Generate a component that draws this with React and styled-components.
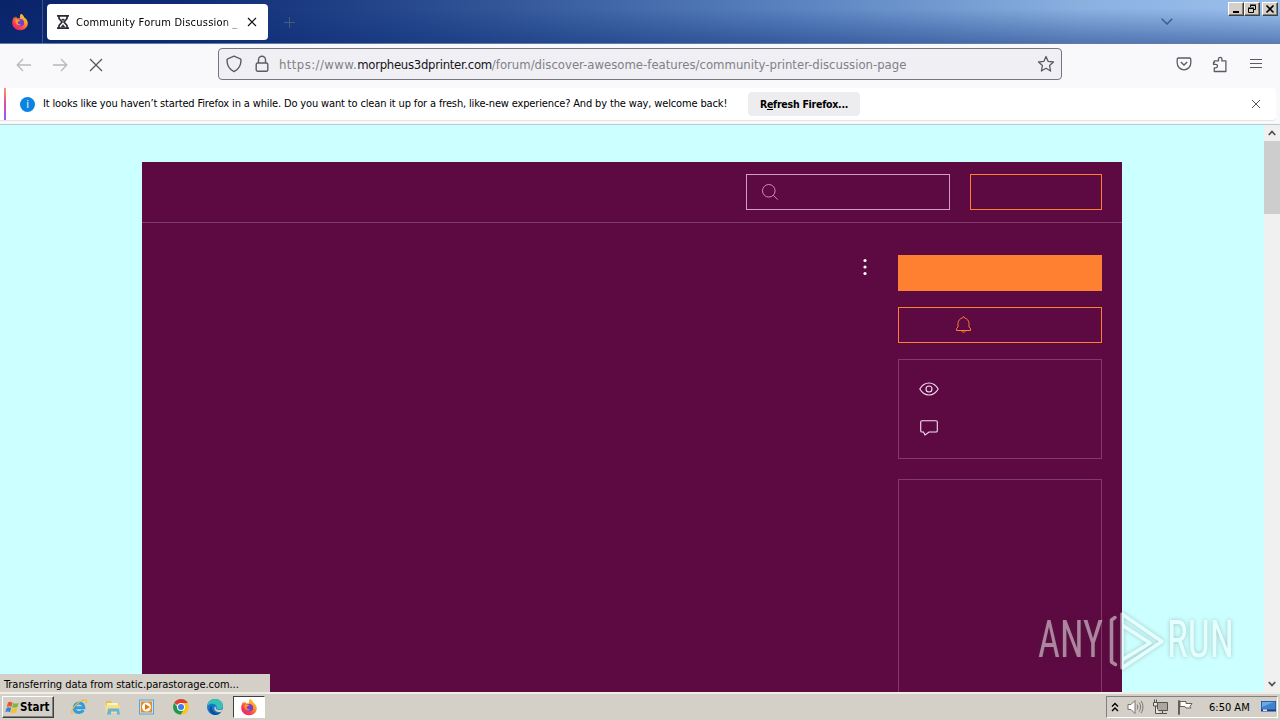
import styled, { createGlobalStyle } from "styled-components";

export default function App(){
    return (<>
        <GlobalStyle/>
        <Screen>
            <TabStrip/>
            <NavBar/>
            <Notification/>
            <Viewport>
                <ForumPage/>
                <Scrollbar/>
                <StatusText>Transferring data from static.parastorage.com...</StatusText>
                <Watermark/>
            </Viewport>
            <Taskbar/>
        </Screen>
    </>)
}

function FirefoxLogo({size = 18}){
    return (<svg width={size} height={size} viewBox="0 0 18 18">
        <defs>
            <linearGradient id="fox" x1="1" y1="0" x2="0.2" y2="1">
                <stop offset="0" stopColor="#fff04a"/>
                <stop offset="0.4" stopColor="#ff9a24"/>
                <stop offset="0.75" stopColor="#ff3c4c"/>
                <stop offset="1" stopColor="#e8197c"/>
            </linearGradient>
        </defs>
        <path fill="url(#fox)" d="M10 .8c2 .9 2.8 2.4 3 3.4 1.7 1 3.8 3.3 3.8 6 0 4.200-3.500 7.100-7.800 7.100S1.200 14 1.200 9.800c0-2.500 1-4.600 2.200-6l.5 1.600 1-2 1.300 2c1-.4 2.100-.3 2.800 0C8.700 3.500 9 2 10 .8z"/>
        <circle cx="9.300" cy="9.800" r="3.800" fill="#7540d2"/>
        <path fill="#ff9b26" d="M4.500 7.300c1.500-1.500 3.300-1 5.200.3-1.200.2-1.800 1-3.200 1.300.3 2.100 2 3 3.700 2.500-1.600 2.200-6 1-5.700-4.100z"/>
    </svg>)
}

function TabStrip(){
    return (<TabBar>
        <Pinned><FirefoxLogo/></Pinned>
        <Tab>
            <svg width="14" height="16" viewBox="0 0 14 16" fill="none" stroke="#2b2a33" strokeWidth="1.700">
                <path d="M1 1.800h12M1 14.200h12M3 2v2.500L6 8l-3 3.500V14M11 2v2.500L8 8l3 3.500V14"/>
                <path d="M5.500 5h3L7 7zM5 13l2-2.500L9 13z" fill="#2b2a33" strokeWidth=".4"/>
            </svg>
            <TabTitle>Community Forum Discussion _</TabTitle>
            <svg width="10" height="10" viewBox="0 0 10 10" stroke="#15141a" strokeWidth="1.200"><path d="M1 1l8 8M9 1L1 9"/></svg>
        </Tab>
        <NewTab>
            <svg width="11" height="11" viewBox="0 0 11 11" stroke="#485a78" strokeWidth="1"><path d="M5.500 0v11M0 5.500h11"/></svg>
        </NewTab>
        <AllTabs>
            <svg width="12" height="7" viewBox="0 0 12 7" fill="none" stroke="#455d86" strokeWidth="1.500"><path d="M.7.7L6 6 11.300.7"/></svg>
        </AllTabs>
        <WindowButtons>
            <WindowButton>
                <svg width="12" height="10" viewBox="0 0 12 10"><path d="M3 7h6v2H3z"/></svg>
            </WindowButton>
            <WindowButton>
                <svg width="12" height="10" viewBox="0 0 12 10" fill="none" stroke="#000"><path d="M4.500 3V1.500h5v4H8M4 1h6M2.500 4.500h5v4h-5zM2 4h6"/></svg>
            </WindowButton>
            <WindowButton $gap>
                <svg width="12" height="10" viewBox="0 0 12 10" stroke="#000" strokeWidth="1.600"><path d="M2.500 1.500l7 7M9.500 1.500l-7 7"/></svg>
            </WindowButton>
        </WindowButtons>
    </TabBar>)
}

function NavBar(){
    return (<Nav>
        <NavButtons>
            <svg width="16" height="14" viewBox="0 0 16 14" fill="none" stroke="#b8b8bd" strokeWidth="1.300"><path d="M15 7H1.500M7 1L1.200 7 7 13"/></svg>
            <svg width="16" height="14" viewBox="0 0 16 14" fill="none" stroke="#b8b8bd" strokeWidth="1.300"><path d="M1 7h13.500M9 1l5.800 6L9 13"/></svg>
            <svg width="16" height="14" viewBox="0 0 16 14" fill="none" stroke="#55545e" strokeWidth="1.300"><path d="M2 1l12 12M14 1L2 13"/></svg>
        </NavButtons>
        <UrlBar>
            <svg width="16" height="18" viewBox="0 0 16 18" fill="none" stroke="#5b5b66" strokeWidth="1.400" strokeLinejoin="round">
                <path d="M8 1.200l6.300 2.600c.5.300.7.600.7 1.100 0 4.800-1.200 8.800-7 11.700C2.200 13.700 1 9.700 1 4.900c0-.5.200-.8.700-1.100z"/>
            </svg>
            <svg width="14" height="18" viewBox="0 0 14 18" fill="none" stroke="#5b5b66" strokeWidth="1.400">
                <rect x="1.200" y="8" width="11.600" height="8.300" rx="1.500"/>
                <path d="M3.500 8V4.800a3.500 3.500 0 0 1 7 0V8"/>
            </svg>
            <Url><Scheme>https://www.</Scheme><Domain>morpheus3dprinter.com</Domain>/forum/discover-awesome-features/community-printer-discussion-page</Url>
            <svg width="18" height="18" viewBox="0 0 18 18" fill="none" stroke="#5b5b66" strokeWidth="1.300" strokeLinejoin="round">
                <path d="M9 1.500l2.200 4.900 5.300.6-3.900 3.600 1 5.400L9 13.300 4.400 16l1-5.400L1.500 7l5.300-.6z"/>
            </svg>
        </UrlBar>
        <Tools>
            <svg width="16" height="14" viewBox="0 0 16 14" fill="none" stroke="#5b5b66" strokeWidth="1.300">
                <path d="M2.500 1h11c.8 0 1.300.5 1.300 1.300V6a6.800 6.800 0 0 1-13.600 0V2.300C1.200 1.500 1.700 1 2.500 1zM4.800 5L8 8l3.200-3"/>
            </svg>
            <svg width="16" height="17" viewBox="0 0 16 17" fill="none" stroke="#5b5b66" strokeWidth="1.300" strokeLinejoin="round">
                <path d="M2.300 6.500V4.900h4.200V3a1.700 1.700 0 0 1 3.400 0v1.900h4v10.600H2.300v-3.700h1.500a1.700 1.700 0 0 0 0-3.400H1.500V6.500z"/>
            </svg>
            <svg width="14" height="12" viewBox="0 0 14 12" stroke="#5b5b66" strokeWidth="1.200"><path d="M1 1.500h12M1 5.500h12M1 9.500h12"/></svg>
        </Tools>
    </Nav>)
}

function Notification(){
    return (<NoticeArea>
        <Notice>
            <Accent/>
            <Info>i</Info>
            <NoticeText>It looks like you haven’t started Firefox in a while. Do you want to clean it up for a fresh, like-new experience? And by the way, welcome back!</NoticeText>
            <Refresh>R<u>e</u>fresh Firefox...</Refresh>
            <NoticeClose width="10" height="10" viewBox="0 0 10 10"><path d="M1 1l8 8M9 1L1 9"/></NoticeClose>
        </Notice>
    </NoticeArea>)
}

function ForumPage(){
    return (<Page>
        <Forum>
            <ForumHeader>
                <SearchBox>
                    <svg width="18" height="18" viewBox="0 0 18 18" fill="none" stroke="#c98dbb"><circle cx="7.800" cy="7.800" r="6.300"/><path d="M12.300 12.300l4.400 4.200"/></svg>
                </SearchBox>
                <LoginBox/>
            </ForumHeader>
            <ForumBody>
                <Dots width="4" height="18" viewBox="0 0 4 18"><circle cx="2" cy="2.500" r="1.600"/><circle cx="2" cy="9" r="1.600"/><circle cx="2" cy="15.500" r="1.600"/></Dots>
                <Sidebar>
                    <Primary/>
                    <Follow>
                        <svg width="17" height="19" viewBox="0 0 17 19" fill="none" stroke="#ff8030">
                            <path d="M1.500 15.500h14v-1.700l-1.500-2V8.500c0-3-2-4.800-4.300-5.500L8.500 1.500 7.300 3C5 3.700 3 5.500 3 8.500v3.300l-1.500 2zM6.500 15.500c.5 2.300 3.500 2.300 4 0"/>
                        </svg>
                    </Follow>
                    <Stats>
                        <svg width="20" height="14" viewBox="0 0 20 14" fill="none" stroke="#f5dff2" strokeWidth="1.100">
                            <path d="M.8 7C3 3.200 6.300 1 10 1s7 2.200 9.200 6c-2.200 3.800-5.500 6-9.200 6S3 10.800.8 7z"/><circle cx="10" cy="7" r="3"/>
                        </svg>
                        <svg width="20" height="16" viewBox="0 0 20 16" fill="none" stroke="#f5dff2" strokeWidth="1.100">
                            <path d="M3 .8h14c.8 0 1.300.5 1.300 1.300v8.600c0 .8-.5 1.300-1.300 1.300H10l-4 3-1.500-3H3c-.8 0-1.300-.5-1.300-1.300V2.100C1.700 1.300 2.200.8 3 .8z"/>
                        </svg>
                    </Stats>
                    <Related/>
                </Sidebar>
            </ForumBody>
        </Forum>
    </Page>)
}

function Scrollbar(){
    return (<Track>
        <ArrowCell><svg width="8" height="6" viewBox="0 0 8 6"><path d="M.8 5L4 1.500 7.200 5"/></svg></ArrowCell>
        <Thumb/>
        <ArrowCell $bottom><svg width="8" height="6" viewBox="0 0 8 6"><path d="M.8 1L4 4.500 7.200 1"/></svg></ArrowCell>
    </Track>)
}

function Watermark(){
    return (<Mark width="212" height="70" viewBox="0 0 212 70">
        <g fill="#fff" fontFamily="Roboto, sans-serif" fontSize="51">
            <text x="2" y="51" textLength="65" lengthAdjust="spacingAndGlyphs">ANY</text>
            <text x="131" y="51" textLength="67" lengthAdjust="spacingAndGlyphs">RUN</text>
        </g>
        <g fill="none" stroke="#fff" strokeLinejoin="round" strokeLinecap="round">
            <path strokeWidth="3.500" d="M79 11.500L75.500 14v42l4 2.500M86 8v54l40-26.500zM86 19l28 18-28 17"/>
        </g>
    </Mark>)
}

function Taskbar(){
    return (<Bar>
        <Start>
            <svg width="15" height="15" viewBox="0 0 15 15">
                <path fill="#e9562b" d="M3 2.500c1.700-1 3-.8 4.500 0L6.400 7C5 6.200 3.500 6.100 1.800 7z"/>
                <path fill="#79b93c" d="M8.200 3c1.500.8 3.400.8 5.500-.3L12.500 7c-2 1-3.800 1-5.400.2z"/>
                <path fill="#3d83cc" d="M1.600 7.900c1.600-1 3.100-.8 4.600 0L5 12.200c-1.500-.9-3-1-4.700-.1z"/>
                <path fill="#f5bf31" d="M6.900 8.200c1.700.8 3.500.8 5.400-.2l-1.200 4.300c-1.900 1-3.700 1-5.400.1z"/>
            </svg>
            Start
        </Start>
        <Launchers>
            <TaskItem>
                <svg width="18" height="18" viewBox="0 0 18 18" fill="none">
                    <path stroke="#2d9de0" strokeWidth="3" d="M4.500 9.700h9.300C13.500 6.500 11.500 5 9.200 5 6.500 5 4.300 7 4.300 10c0 5 6.500 6 9 2.200"/>
                    <path stroke="#eebd37" strokeWidth="1.200" d="M2.500 16C-.8 13 8.500 2 15.200 1.800c2-.1 1.600 2.200.6 3.700"/>
                </svg>
            </TaskItem>
            <TaskItem>
                <svg width="18" height="18" viewBox="0 0 18 18">
                    <path fill="#e5bd58" d="M2 3h5l1 2h7v10H2z"/><path fill="#fff4b8" d="M3 5h11v5H3z"/><path fill="#f8df8a" d="M1.500 7h14v8h-14z"/>
                    <path fill="#65b5d9" d="M4 10.500h11l1 6h-3v-3H7v3H3z"/>
                </svg>
            </TaskItem>
            <TaskItem>
                <svg width="18" height="18" viewBox="0 0 18 18">
                    <path fill="#58a4d8" d="M1 1.500h15v15H1z"/><path fill="#c4e3f3" d="M2 2.500h13v13H2z"/>
                    <path fill="#f18a19" d="M3 3.500h11v11H3z"/><circle cx="8.500" cy="9" r="4.500" fill="#fff"/><path fill="#e87509" d="M7 6l5 3-5 3z"/>
                </svg>
            </TaskItem>
            <TaskItem>
                <svg width="18" height="18" viewBox="0 0 18 18">
                    <path fill="#e33b2e" d="M2.200 5a7.700 7.700 0 0 1 13.600 0L9 9z"/>
                    <path fill="#f9c51d" d="M15.700 5A7.700 7.700 0 0 1 8.600 16.700L12 9 9 5z"/>
                    <path fill="#24984a" d="M2.200 5a7.700 7.700 0 0 0 6.400 11.700L12 11 6 10z"/>
                    <circle cx="9" cy="9" r="4" fill="#fff"/><circle cx="9" cy="9" r="3" fill="#3c7fe5"/>
                </svg>
            </TaskItem>
            <TaskItem>
                <svg width="18" height="18" viewBox="0 0 18 18">
                    <circle cx="9" cy="9" r="8" fill="#1577c8"/>
                    <path fill="#36c1b7" d="M1.200 8C2 3.500 5 1 9 1c4.800 0 8 3.200 8 7 0 3.500-5 4.500-6.500 2.500C12 7 6 3.500 1.200 8z"/>
                    <path fill="#0d50a0" d="M6 8c-1 5 4 8.300 8.500 6.800C10 19 4 16.700 3.500 11.500 3.400 9.700 4.500 8.400 6 8z"/>
                    <path fill="#d4d0c8" d="M10 8.300c-1.500 3 2.500 5 6.700 3l-1.200 2.500C11 15 7.500 12 8.500 9.200z"/>
                </svg>
            </TaskItem>
            <TaskItem $active><FirefoxLogo/></TaskItem>
        </Launchers>
        <Tray>
            <svg width="8" height="11" viewBox="0 0 8 11" fill="none" stroke="#000" strokeWidth="1.400"><path d="M1 4.500l3-3 3 3M1 9l3-3 3 3"/></svg>
            <svg width="17" height="16" viewBox="0 0 17 16" fill="none" stroke="#77736d">
                <path fill="#fff" d="M1 5.500h3l4-4v13l-4-4H1z"/><path d="M10 5.500c1 1.300 1 3.700 0 5M12 3.500c2 2.500 2 6.500 0 9M14 2c2.600 3.500 2.600 8.500 0 12"/>
            </svg>
            <svg width="17" height="16" viewBox="0 0 17 16" fill="#e9e7e2" stroke="#55524c">
                <path fill="#aaa6a0" d="M5.500 3.500h10v8h-10z"/><path d="M8 14.500h7M10.500 12v2M1.500 3.500h4V7h-4zM2.500 3V.5M4.500 3V.5M3.500 7v7.500H8"/>
            </svg>
            <svg width="17" height="16" viewBox="0 0 17 16" fill="#fff" stroke="#66625b"><path d="M1.500 1.500h1v14h-1zM3 2.500h6v2h6l-2 3 1 1.500H9l-1-1.500H3z"/></svg>
            <Clock>6:50 AM</Clock>
            <svg width="16" height="14" viewBox="0 0 16 14"><path fill="#1b3f86" d="M1 1h15v10.500H1z"/><path fill="#3d83d2" d="M1.500 1.500h14v8h-14z"/><path fill="#69aae4" d="M2 2h12L2 7z"/><path fill="#e6eaf0" d="M3 9.500h4V11H3z"/></svg>
        </Tray>
    </Bar>)
}

const GlobalStyle = createGlobalStyle`
    * {
        box-sizing: border-box;
    }

    body {
        margin: 0;
        overflow: hidden;
        font-family: "DejaVu Sans Condensed", "DejaVu Sans", sans-serif;
        font-stretch: condensed;
        font-size: 11px;
        color: #000;
    }

    svg {
        display: block;
        flex: none;
    }
`

const Screen = styled.div`
    width: 1280px;
    height: 720px;
    display: flex;
    flex-direction: column;
    overflow: hidden;
    white-space: nowrap;
`

const TabBar = styled.div`
    height: 44px;
    flex: none;
    display: flex;
    align-items: flex-start;
    background: linear-gradient(180deg, rgba(10,45,120,0) 20%, rgba(10,45,120,0.45)),
        linear-gradient(90deg, #0a246a 0, #0e2b74 180px, #2c4e92 450px, #5b84c0 800px, #8ab0e0 1080px, #9bc0ed 1280px);
    border-bottom: 1px solid #647ba5;
`

const Pinned = styled.div`
    width: 43px;
    height: 43px;
    padding: 13px 0 0 11px;
    border-right: 1px solid #3c5286;
`

const Tab = styled.div`
    width: 221px;
    height: 36px;
    margin: 4px 0 0 4px;
    padding: 0 11px 0 9px;
    display: flex;
    align-items: center;
    background: #fff;
    border-radius: 4px;
`

const TabTitle = styled.div`
    width: 168px;
    margin: 1px 3px 0 6px;
    overflow: hidden;
    letter-spacing: 0.22px;
    mask-image: linear-gradient(90deg, #000 88%, transparent);
`

const NewTab = styled.div`
    padding: 17px 0 0 16px;
`

const AllTabs = styled.div`
    margin-left: auto;
    padding: 18px 55px 0 0;
`

const WindowButtons = styled.div`
    display: flex;
    padding: 2px 2px 0 0;
`

const WindowButton = styled.div`
    width: 16px;
    height: 14px;
    margin-left: ${({$gap}) => $gap ? "2px" : "0"};
    padding: 1px;
    background: #d4d0c8;
    border: 1px solid;
    border-color: #fff #404040 #404040 #fff;
    box-shadow: inset -1px -1px #808080;
`

const Nav = styled.div`
    height: 44px;
    flex: none;
    display: flex;
    align-items: flex-start;
    padding: 4px 17px 0 16px;
    background: #f9f9fb;
`

const NavButtons = styled.div`
    width: 202px;
    display: flex;
    gap: 20px;
    padding-top: 10px;
`

const UrlBar = styled.div`
    width: 844px;
    height: 32px;
    display: flex;
    align-items: center;
    padding: 0 6px 0 7px;
    background: #f0f0f4;
    border: 1px solid #77767e;
    border-radius: 4px;

    svg + svg {
        margin-left: 13px;
    }
`

const Url = styled.div`
    flex: 1;
    margin-left: 10px;
    font-size: 13px;
    color: #808086;
`

const Scheme = styled.span`
    letter-spacing: 0.42px;
`

const Domain = styled.span`
    color: #15141a;
    letter-spacing: -0.29px;
`

const Tools = styled.div`
    margin-left: auto;
    display: flex;
    align-items: center;
    gap: 21px;
    height: 32px;

    svg:first-child {
        margin-right: -1px;
    }
`

const NoticeArea = styled.div`
    height: 37px;
    flex: none;
    padding-right: 4px;
    background: #f9f9fb;
    border-bottom: 1px solid #b5cccf;
`

const Notice = styled.div`
    height: 33px;
    display: flex;
    align-items: center;
    padding: 0 15px 0 4px;
    background: #fff;
    border-bottom: 1px solid #eae6e6;
    border-radius: 0 4px 4px 0;
`

const Accent = styled.div`
    width: 2px;
    height: 32px;
    background: linear-gradient(#ff9a62, #e84aa0 45%, #9059ff);
`

const Info = styled.div`
    width: 15px;
    height: 15px;
    margin: 0 8px 0 14px;
    border-radius: 50%;
    background: #0a84e0;
    color: #fff;
    font-size: 11px;
    line-height: 15px;
    text-align: center;
`

const NoticeText = styled.div`
    width: 705px;
    padding-bottom: 2px;
    letter-spacing: -0.147px;
`

const Refresh = styled.div`
    width: 112px;
    height: 24px;
    background: #ededf0;
    border-radius: 4px;
    font-weight: bold;
    font-size: 10.5px;
    letter-spacing: -0.25px;
    line-height: 25px;
    text-align: center;
`

const NoticeClose = styled.svg`
    margin-left: auto;
    stroke: #55545e;
`

const Viewport = styled.div`
    position: relative;
    height: 567px;
    flex: none;
    display: flex;
`

const Page = styled.div`
    width: 1264px;
    padding: 37px 142px 0;
    background: #ccffff;
`

const Forum = styled.div`
    height: 530px;
    background: #5c0a41;
    overflow: hidden;
`

const ForumHeader = styled.div`
    height: 61px;
    display: flex;
    justify-content: flex-end;
    gap: 20px;
    padding: 12px 20px;
    border-bottom: 1px solid #803b69;
`

const SearchBox = styled.div`
    width: 204px;
    height: 36px;
    padding: 8px 0 0 14px;
    border: 1px solid #d39bc7;
`

const LoginBox = styled.div`
    width: 132px;
    height: 36px;
    border: 1px solid #ff8030;
`

const ForumBody = styled.div`
    display: flex;
    justify-content: flex-end;
    gap: 31px;
    padding: 32px 20px 0;
`

const Dots = styled.svg`
    margin-top: 3px;
    fill: #fff;
`

const Sidebar = styled.div`
    width: 204px;
    display: flex;
    flex-direction: column;
`

const Primary = styled.div`
    height: 36px;
    background: #ff8030;
`

const Follow = styled.div`
    height: 36px;
    margin-top: 16px;
    padding: 7px 0 0 56px;
    border: 1px solid #ff8030;
`

const Stats = styled.div`
    height: 100px;
    margin: 16px 0 20px;
    padding: 22px 0 0 20px;
    display: flex;
    flex-direction: column;
    gap: 24px;
    border: 1px solid #803b69;
`

const Related = styled.div`
    height: 230px;
    border: 1px solid #803b69;
`

const Track = styled.div`
    width: 16px;
    display: flex;
    flex-direction: column;
    background: #f0f0f0;
`

const ArrowCell = styled.div`
    height: 16px;
    margin-top: ${({$bottom}) => $bottom ? "auto" : "0"};
    display: flex;
    align-items: center;
    justify-content: center;

    path {
        fill: none;
        stroke: #505050;
        stroke-width: 1.8;
    }
`

const Thumb = styled.div`
    height: 73px;
    background: #cdcdcd;
`

const StatusText = styled.div`
    position: absolute;
    left: 0;
    bottom: 0;
    width: 270px;
    height: 18px;
    padding: 4px 0 0 4px;
    background: #d4d0c8;
    letter-spacing: -0.06px;
`

const Mark = styled.svg`
    position: absolute;
    left: 1036px;
    bottom: 16px;
    overflow: visible;
    opacity: 0.5;
    filter: drop-shadow(0 0 2px rgba(60,60,60,0.6));
`

const Bar = styled.div`
    height: 28px;
    flex: none;
    display: flex;
    align-items: center;
    padding: 2px 2px 0;
    background: #d4d0c8;
    box-shadow: inset 0 2px #efede8;
`

const Start = styled.div`
    width: 52px;
    height: 22px;
    display: flex;
    align-items: center;
    padding-left: 2px;
    font-size: 11.5px;
    font-weight: bold;
    border: 1px solid;
    border-color: #fff #404040 #404040 #fff;
    box-shadow: inset -1px -1px #808080;
`

const Launchers = styled.div`
    display: flex;
    margin-left: 9px;
    gap: 2px;
`

const TaskItem = styled.div`
    width: 32px;
    height: 22px;
    display: flex;
    align-items: center;
    justify-content: center;
    background: ${({$active}) => $active ? "#fff" : "none"};
    border: 1px solid;
    border-color: ${({$active}) => $active ? "#404040 #fff #fff #404040" : "transparent"};
`

const Tray = styled.div`
    width: 172px;
    height: 22px;
    margin-left: auto;
    display: flex;
    align-items: center;
    gap: 8px;
    padding: 0 0 0 4px;
    border: 1px solid;
    border-color: #808080 #fff #fff #808080;
`

const Clock = styled.div`
    width: 43px;
    margin: 0 0 0 7px;
`
